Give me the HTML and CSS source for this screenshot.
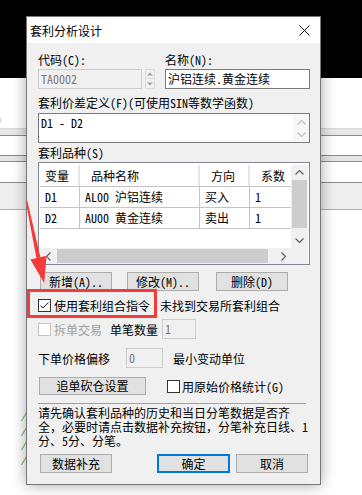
FILE: index.html
```html
<!DOCTYPE html>
<html lang="zh-CN">
<head>
  <meta charset="UTF-8" />
  <title>套利分析设计</title>
  <link rel="stylesheet" href="styles.css">
</head>
<body>
  <div class="desk">
    <div class="desk-top"></div>
    <div class="desk-gap"><span class="clip-char">0</span></div>
    <div class="band band-a"></div>
    <div class="desk-white w19"></div>
    <div class="band band-b"></div>
    <div class="desk-white w20"></div>
    <div class="band band-c"></div>
    <div class="desk-log">/<br>/<br>/<br>/</div>
  </div>

  <div class="dialog">
    <div class="titlebar">
      <span class="title">套利分析设计</span>
      <svg class="close" width="11" height="11" viewBox="0 0 11 11"><path d="M0.5 0.5 L10.5 10.5 M10.5 0.5 L0.5 10.5" stroke="#111" stroke-width="1"/></svg>
    </div>

    <div class="content">
      <div class="row-top">
        <div>
          <div class="lbl">代码(C):</div>
          <div class="code-wrap">
            <div class="input disabled code">TA0002</div>
            <div class="spin">
              <div class="spin-btn"><svg width="6" height="4" viewBox="0 0 6 4"><path d="M0 3.5 L3 0.5 L6 3.5 Z" fill="#a0a0a0"/></svg></div>
              <div class="spin-btn"><svg width="6" height="4" viewBox="0 0 6 4"><path d="M0 0.5 L3 3.5 L6 0.5 Z" fill="#a0a0a0"/></svg></div>
            </div>
          </div>
        </div>
        <div>
          <div class="lbl">名称(N):</div>
          <div class="input name">沪铝连续.黄金连续</div>
        </div>
      </div>

      <div class="lbl gap7">套利价差定义(F)(可使用SIN等数学函数)</div>
      <div class="textarea">
        <div class="ta-text">D1 - D2</div>
        <div class="ta-scroll">
          <svg width="9" height="5" viewBox="0 0 9 5"><path d="M0.5 4.5 L4.5 0.5 L8.5 4.5" fill="none" stroke="#c2c2c2" stroke-width="1.2"/></svg>
          <svg width="9" height="5" viewBox="0 0 9 5"><path d="M0.5 0.5 L4.5 4.5 L8.5 0.5" fill="none" stroke="#c2c2c2" stroke-width="1.2"/></svg>
        </div>
      </div>

      <div class="lbl gap3">套利品种(S)</div>
      <div class="list">
        <div class="list-main">
          <div class="grid">
            <div class="hdr">
              <span class="c1">变量</span><span class="c2">品种名称</span><span class="c3">方向</span><span class="c4">系数</span>
            </div>
            <div class="trow">
              <span class="c1">D1</span><span class="c2">AL00 沪铝连续</span><span class="c3">买入</span><span class="c4">1</span>
            </div>
            <div class="trow last">
              <span class="c1">D2</span><span class="c2">AU00 黄金连续</span><span class="c3">卖出</span><span class="c4">1</span>
            </div>
          </div>
          <div class="vscroll">
            <div class="arrow-box"><svg width="9" height="5" viewBox="0 0 9 5"><path d="M0.5 4.5 L4.5 0.5 L8.5 4.5" fill="none" stroke="#606060" stroke-width="1.2"/></svg></div>
            <div class="vthumb"></div>
            <div class="fill"></div>
            <div class="arrow-box"><svg width="9" height="5" viewBox="0 0 9 5"><path d="M0.5 0.5 L4.5 4.5 L8.5 0.5" fill="none" stroke="#606060" stroke-width="1.2"/></svg></div>
          </div>
        </div>
        <div class="list-foot">
          <div class="hscroll">
            <div class="harrow"><svg width="5" height="9" viewBox="0 0 5 9"><path d="M4.5 0.5 L0.5 4.5 L4.5 8.5" fill="none" stroke="#606060" stroke-width="1.2"/></svg></div>
            <div class="hthumb"></div>
            <div class="harrow right"><svg width="5" height="9" viewBox="0 0 5 9"><path d="M0.5 0.5 L4.5 4.5 L0.5 8.5" fill="none" stroke="#606060" stroke-width="1.2"/></svg></div>
          </div>
          <div class="corner"></div>
        </div>
      </div>

      <div class="btn-row">
        <div class="btn b-add">新增(A)..</div>
        <div class="btn b-edit">修改(M)..</div>
        <div class="btn b-del">删除(D)</div>
      </div>

      <div class="check-row">
        <span class="cb"><svg width="11" height="11" viewBox="0 0 11 11"><path d="M1.5 5.5 L4 8 L9.5 2.5" fill="none" stroke="#222" stroke-width="1"/></svg></span>
        <span>使用套利组合指令</span>
        <span class="note">未找到交易所套利组合</span>
      </div>

      <div class="line-row">
        <span class="cb off"></span>
        <span class="grey">拆单交易</span>
        <span class="qty-lbl">单笔数量</span>
        <div class="input disabled qty">1</div>
      </div>

      <div class="line-row gap9">
        <span>下单价格偏移</span>
        <div class="input disabled offset">0</div>
        <span class="unit">最小变动单位</span>
      </div>

      <div class="line-row gap9 h18">
        <div class="btn b-chase">追单砍仓设置</div>
        <span class="cb raw"></span>
        <span>用原始价格统计(G)</span>
      </div>

      <div class="sep"></div>

      <p class="hint">请先确认套利品种的历史和当日分笔数据是否齐<br>全，必要时请点击数据补充按钮，分笔补充日线、1<br>分、5分、分笔。</p>

      <div class="btn-row foot">
        <div class="btn b-data">数据补充</div>
        <div class="btn b-ok">确定</div>
        <div class="btn b-cancel">取消</div>
      </div>
    </div>
  </div>

  <div class="redbox"></div>
  <svg class="pointer" width="362" height="495" viewBox="0 0 362 495">
    <path d="M25.7 201.2 L27.3 200.8 L40.5 257.6 L36.5 258.4 Z" fill="#f23b3b"/>
    <path d="M30.4 259.6 L46.6 255.8 L44.2 283 Z" fill="#f23b3b"/>
  </svg>
</body>
</html>
```

FILE: styles.css
```css
* {
  margin: 0;
  padding: 0;
  box-sizing: border-box;
}
body {
  width: 362px;
  height: 495px;
  overflow: hidden;
  position: relative;
  background: #fff;
  color: #000;
  font-family: "Noto Sans Mono CJK SC", "Noto Sans CJK SC", sans-serif;
  font-size: 12px;
}

/* desktop behind the dialog */
.desk-top {
  height: 78px;
  background: #000;
}
.desk-gap {
  height: 50px;
  padding-top: 36px;
  line-height: 12px;
}
.clip-char {
  display: inline-block;
  margin-left: -5px;
  color: #c0702a;
}
.band {
  border-top: 1px solid #8a8a8a;
  border-bottom: 1px solid #8a8a8a;
}
.band-a {
  height: 8px;
  border-top-color: #d6d6d6;
  background: #e8e8e8;
}
.band-b {
  height: 7px;
  background: #e6e6e6;
}
.band-c {
  height: 28px;
  background: #efefef;
  border-bottom-color: #b0b0b0;
}
.w19 { height: 19px; }
.w20 { height: 20px; }
.desk-log {
  margin-top: 197px;
  padding-left: 21px;
  color: #1f8a2e;
  font-size: 11px;
  line-height: 14.7px;
  font-style: italic;
}

/* dialog window */
.dialog {
  position: absolute;
  left: 26px;
  top: 16px;
  width: 295px;
  height: 469px;
  border: 1px solid #777;
  background: #f0f0f0;
  box-shadow: 0 0 14px rgba(0, 0, 0, 0.35);
}
.titlebar {
  height: 26px;
  background: #fff;
  display: flex;
  align-items: center;
  justify-content: space-between;
  padding: 0 10px 0 3px;
}
.title {
  font-family: "Noto Sans CJK SC", sans-serif;
  font-size: 12px;
}
.content {
  padding: 10px 10px 0 11px;
}
.lbl {
  height: 14px;
  line-height: 14px;
  white-space: nowrap;
}
.gap7 { margin-top: 7px; }
.gap3 { margin-top: 3px; }
.gap9 { margin-top: 9px; }

.row-top {
  display: grid;
  grid-template-columns: 117px 145px;
  column-gap: 10px;
}
.row-top .lbl { margin-bottom: 2px; }
.code-wrap {
  display: flex;
  gap: 3px;
}
.input {
  height: 20px;
  border: 1px solid #7a7a7a;
  background: #fff;
  padding: 0 2px;
  line-height: 18px;
  white-space: nowrap;
  overflow: hidden;
}
.input.disabled {
  background: #f0f0f0;
  border-color: #cccccc;
  color: #7a7a7a;
}
.code { width: 104px; }
.spin {
  width: 10px;
  display: flex;
  flex-direction: column;
}
.spin-btn {
  height: 10px;
  display: flex;
  align-items: center;
  justify-content: center;
  border: 1px solid #dcdcdc;
}
.spin-btn + .spin-btn { border-top: none; }

.textarea {
  margin-top: 3px;
  height: 30px;
  border: 1px solid #7a7a7a;
  background: #fff;
  display: flex;
}
.ta-text {
  flex: 1;
  padding: 2px 2px;
  line-height: 14px;
}
.ta-scroll {
  width: 16px;
  background: #f7f7f7;
  display: flex;
  flex-direction: column;
  align-items: center;
  justify-content: space-between;
  padding: 6px 0 5px;
}

/* list view */
.list {
  margin-top: 2px;
  height: 103px;
  border: 1px solid #828790;
  background: #fff;
  padding: 2px 1px 0 1px;
}
.list-main {
  height: 83px;
  display: flex;
}
.grid {
  width: 251px;
  overflow: hidden;
}
.hdr, .trow {
  display: flex;
  white-space: nowrap;
}
.hdr {
  height: 21px;
  line-height: 21px;
}
.hdr span {
  border-right: 2px solid #e5e5e5;
  padding-left: 11px;
}
.hdr .c1 { padding-left: 5px; }
.trow {
  height: 21px;
  line-height: 20px;
  border-top: 1px solid #c4c4c4;
}
.trow.last { border-bottom: 1px solid #c4c4c4; height: 22px; }
.trow span {
  border-right: 1px solid #c4c4c4;
  padding-left: 5px;
}
.c1 { width: 40px; flex: none; }
.c2 { width: 120px; flex: none; }
.c3 { width: 50px; flex: none; }
.c4 { width: 60px; flex: none; }
.vscroll {
  width: 17px;
  background: #f0f0f0;
  display: flex;
  flex-direction: column;
}
.arrow-box {
  height: 15px;
  display: flex;
  align-items: center;
  justify-content: center;
}
.vthumb {
  height: 48px;
  margin: 0 1px;
  background: #cdcdcd;
}
.fill { flex: 1; }
.list-foot {
  height: 16px;
  display: flex;
}
.hscroll {
  width: 251px;
  background: #f0f0f0;
  display: flex;
  align-items: center;
}
.harrow {
  width: 17px;
  display: flex;
  justify-content: center;
}
.harrow.right { width: 23px; justify-content: flex-start; padding-left: 13px; }
.hthumb {
  width: 211px;
  height: 14px;
  background: #cdcdcd;
}
.corner {
  width: 17px;
  background: #f0f0f0;
}

/* buttons */
.btn-row {
  display: flex;
  margin-top: 7px;
}
.btn {
  height: 19px;
  width: 72px;
  border: 1px solid #adadad;
  background: #e1e1e1;
  text-align: center;
  line-height: 17px;
  white-space: nowrap;
}
.b-add { margin-left: 2px; }
.b-edit { margin-left: 15px; }
.b-del { margin-left: 17px; }
.b-data { margin-left: 2px; }
.b-ok {
  margin-left: 45px;
  width: 73px;
  border: 2px solid #0078d7;
  line-height: 15px;
}
.b-cancel { margin-left: 6px; }
.b-chase {
  width: 107px;
  height: 18px;
  line-height: 16px;
  margin-left: 1px;
}

.check-row, .line-row {
  display: flex;
  align-items: center;
  white-space: nowrap;
}
.check-row { height: 28px; }
.line-row { height: 20px; }
.line-row.h18 { height: 18px; }
.cb {
  width: 13px;
  height: 13px;
  border: 1px solid #333;
  background: #fff;
  margin-right: 3px;
  display: flex;
  align-items: center;
  justify-content: center;
  flex: none;
}
.cb.off { border-color: #c4c4c4; }
.cb.raw { margin-left: 21px; margin-right: 2px; }
.note { margin-left: 10px; }
.grey { color: #a0a0a0; }
.qty-lbl { margin-left: 8px; }
.qty {
  width: 34px;
  margin-left: 4px;
}
.offset {
  width: 37px;
  margin-left: 16px;
}
.unit { margin-left: 10px; }
.sep {
  margin-top: 8px;
  width: 268px;
  border-top: 1px solid #a0a0a0;
}
.hint {
  margin-top: 2px;
  line-height: 14px;
  white-space: nowrap;
}
.btn-row.foot { margin-top: 6px; }

/* annotation over the screenshot */
.redbox {
  position: absolute;
  left: 27px;
  top: 289px;
  width: 130px;
  height: 29px;
  border: 3px solid #f23b3b;
}
.pointer {
  position: absolute;
  left: 0;
  top: 0;
  pointer-events: none;
}
```
